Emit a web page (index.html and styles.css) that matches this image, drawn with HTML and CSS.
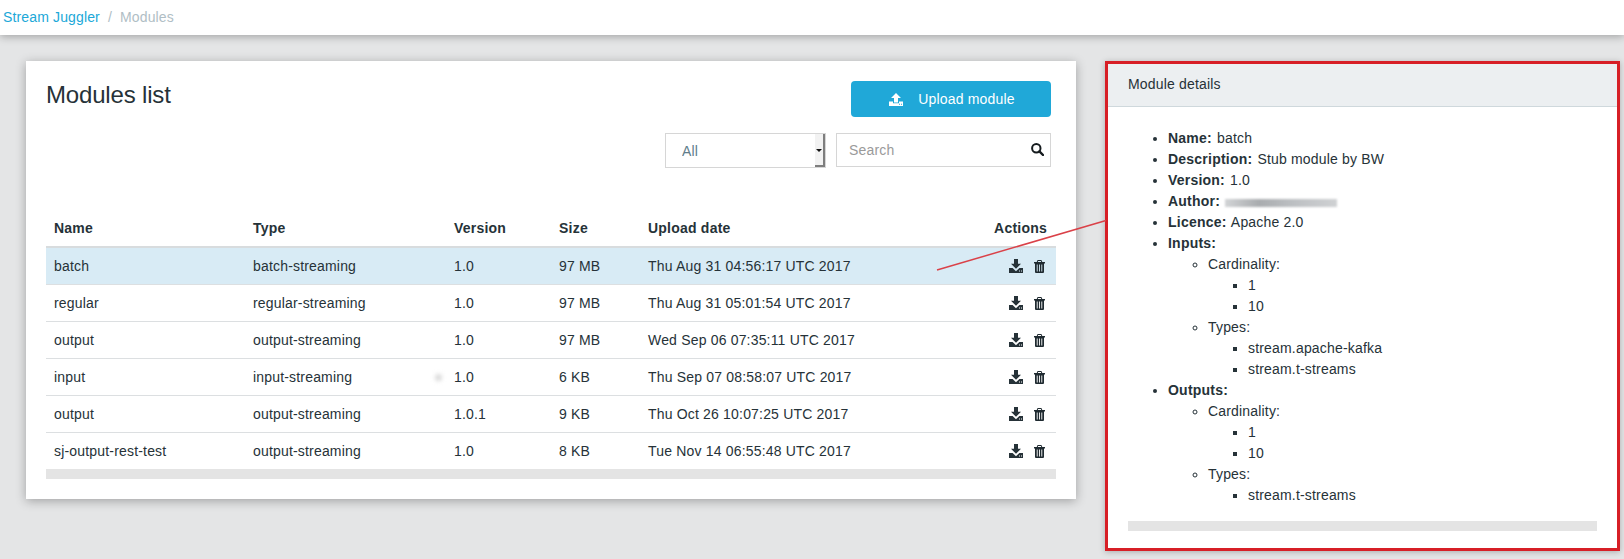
FILE: index.html
```html
<!DOCTYPE html>
<html lang="en">
<head>
<meta charset="utf-8">
<title>Modules</title>
<link rel="stylesheet" href="styles.css">
</head>
<body>
<svg class="defs" aria-hidden="true">
  <symbol id="i-download" viewBox="0 0 14 14"><path fill-rule="evenodd" d="M5 0h4v4.8h3L7 9.8 2 4.8h3zM0 9h3.6L7 12.2 10.4 9H14v5H0zM10 11.4v1h1v-1zM12 11.4v1h1v-1z"/></symbol>
  <symbol id="i-upload" viewBox="0 0 14 13"><path fill-rule="evenodd" d="M7 0l5 5H9v4.4H5V5H2zM0 8.4h4v1.8h6V8.4h4V13H0zM10 10.8v1h1v-1zM12 10.8v1h1v-1z"/></symbol>
  <symbol id="i-trash" viewBox="0 0 11 13"><path fill-rule="evenodd" d="M3.6 0h3.8l.9 2H11v1.4H10V12a1 1 0 0 1-1 1H2a1 1 0 0 1-1-1V3.4H0V2h2.7zM4.1 1.1L3.8 2h3.4l-.3-.9zM2.75 4.4v7h.9v-7zM5.05 4.4v7h.9v-7zM7.35 4.4v7h.9v-7z"/></symbol>
  <symbol id="i-search" viewBox="0 0 13 13"><circle cx="5.3" cy="5.3" r="4.2" fill="none" stroke="currentColor" stroke-width="2"/><path d="M8.4 8.4L12 12" fill="none" stroke="currentColor" stroke-width="2.4" stroke-linecap="round"/></symbol>
</svg>

<nav class="topbar">
  <a class="crumb-link" href="#">Stream Juggler</a>
  <span class="crumb-sep">/</span>
  <span class="crumb-active">Modules</span>
</nav>

<main class="content">
  <section class="card">
    <div class="card-head">
      <h1 class="title">Modules list</h1>
      <div class="tools">
        <button class="upload-btn" type="button">
          <svg class="upload-icon"><use href="#i-upload"/></svg>
          <span>Upload module</span>
        </button>
        <div class="filters">
          <div class="select-wrap">
            <select class="select"><option>All</option></select>
            <span class="select-arrow"></span>
          </div>
          <div class="search-wrap">
            <input class="search" type="text" placeholder="Search">
            <svg class="search-icon"><use href="#i-search"/></svg>
          </div>
        </div>
      </div>
    </div>

    <table class="modules">
      <colgroup>
        <col class="c-name"><col class="c-type"><col class="c-version"><col class="c-size"><col class="c-date"><col class="c-actions">
      </colgroup>
      <thead>
        <tr><th>Name</th><th>Type</th><th>Version</th><th>Size</th><th>Upload date</th><th class="th-actions">Actions</th></tr>
      </thead>
      <tbody>
        <tr class="selected"><td>batch</td><td>batch-streaming</td><td>1.0</td><td>97 MB</td><td>Thu Aug 31 04:56:17 UTC 2017</td><td><div class="actions"><svg class="ic-dl"><use href="#i-download"/></svg><svg class="ic-tr"><use href="#i-trash"/></svg></div></td></tr>
        <tr><td>regular</td><td>regular-streaming</td><td>1.0</td><td>97 MB</td><td>Thu Aug 31 05:01:54 UTC 2017</td><td><div class="actions"><svg class="ic-dl"><use href="#i-download"/></svg><svg class="ic-tr"><use href="#i-trash"/></svg></div></td></tr>
        <tr><td>output</td><td>output-streaming</td><td>1.0</td><td>97 MB</td><td>Wed Sep 06 07:35:11 UTC 2017</td><td><div class="actions"><svg class="ic-dl"><use href="#i-download"/></svg><svg class="ic-tr"><use href="#i-trash"/></svg></div></td></tr>
        <tr><td>input</td><td>input-streaming<span class="smudge"></span></td><td>1.0</td><td>6 KB</td><td>Thu Sep 07 08:58:07 UTC 2017</td><td><div class="actions"><svg class="ic-dl"><use href="#i-download"/></svg><svg class="ic-tr"><use href="#i-trash"/></svg></div></td></tr>
        <tr><td>output</td><td>output-streaming</td><td>1.0.1</td><td>9 KB</td><td>Thu Oct 26 10:07:25 UTC 2017</td><td><div class="actions"><svg class="ic-dl"><use href="#i-download"/></svg><svg class="ic-tr"><use href="#i-trash"/></svg></div></td></tr>
        <tr><td>sj-output-rest-test</td><td>output-streaming</td><td>1.0</td><td>8 KB</td><td>Tue Nov 14 06:55:48 UTC 2017</td><td><div class="actions"><svg class="ic-dl"><use href="#i-download"/></svg><svg class="ic-tr"><use href="#i-trash"/></svg></div></td></tr>
      </tbody>
    </table>
    <div class="scrollbar"></div>
  </section>

  <aside class="panel">
    <header class="panel-head">Module details</header>
    <div class="panel-body">
      <ul class="l1">
        <li><strong>Name:</strong> batch</li>
        <li><strong>Description:</strong> Stub module by BW</li>
        <li><strong>Version:</strong> 1.0</li>
        <li><strong>Author:</strong> <span class="blurred"></span></li>
        <li><strong>Licence:</strong> Apache 2.0</li>
        <li><strong>Inputs:</strong>
          <ul class="l2">
            <li>Cardinality:
              <ul class="l3"><li>1</li><li>10</li></ul>
            </li>
            <li>Types:
              <ul class="l3"><li>stream.apache-kafka</li><li>stream.t-streams</li></ul>
            </li>
          </ul>
        </li>
        <li><strong>Outputs:</strong>
          <ul class="l2">
            <li>Cardinality:
              <ul class="l3"><li>1</li><li>10</li></ul>
            </li>
            <li>Types:
              <ul class="l3"><li>stream.t-streams</li></ul>
            </li>
          </ul>
        </li>
      </ul>
      <div class="scrollbar panel-scroll"></div>
    </div>
  </aside>
</main>

<svg class="callout" width="1624" height="559" aria-hidden="true"><line x1="937" y1="270" x2="1106" y2="220.5"/></svg>
</body>
</html>
```

FILE: styles.css
```css
* { box-sizing: border-box; }

html, body {
  margin: 0;
  height: 559px;
  overflow: hidden;
}

body {
  position: relative;
  background: #e4e5e6;
  color: #263238;
  font-family: "Liberation Sans", Arial, sans-serif;
  font-size: 14px;
  line-height: 21px;
  letter-spacing: .18px;
}

strong { letter-spacing: .22px; margin-right: 1px; }

.defs { display: none; }

.topbar {
  display: flex;
  align-items: center;
  height: 35px;
  padding-left: 3px;
  background: #fff;
  box-shadow: 0 2px 8px rgba(0, 0, 0, .28);
}

.crumb-link { color: #20a8d8; text-decoration: none; letter-spacing: .14px; }
.crumb-sep { color: #b0bec5; margin: 0 8px; }
.crumb-active { color: #b0bec5; letter-spacing: .14px; }

.content {
  display: flex;
  align-items: flex-start;
  gap: 29px;
  padding: 26px 0 0 26px;
}

.card {
  width: 1050px;
  padding: 20px;
  background: #fff;
  box-shadow: 0 2px 10px rgba(0, 0, 0, .3);
}

.card-head {
  display: flex;
  justify-content: space-between;
  align-items: flex-start;
  margin-bottom: 42px;
  padding-right: 5px;
}

.title {
  margin: 0;
  font-size: 24px;
  font-weight: 400;
  line-height: 27px;
  letter-spacing: -.17px;
}

.tools {
  display: flex;
  flex-direction: column;
  align-items: flex-end;
  gap: 16px;
}

.upload-btn {
  display: flex;
  align-items: center;
  justify-content: center;
  gap: 15px;
  width: 200px;
  height: 36px;
  padding: 0 0 0 2px;
  border: 0;
  border-radius: 4px;
  background: #20a8d8;
  color: #fff;
  font: inherit;
  letter-spacing: .18px;
}

.upload-icon { width: 14px; height: 13px; fill: #fff; }

.filters { display: flex; align-items: flex-start; gap: 10px; }

.select-wrap { position: relative; width: 161px; height: 35px; }

.select {
  display: block;
  width: 100%;
  height: 100%;
  padding: 2px 0 0 16px;
  border: 1px solid #d6d6d6;
  border-radius: 0;
  background: #fff;
  color: #607d8b;
  font: inherit;
  letter-spacing: .18px;
  appearance: none;
}

.select-arrow {
  position: absolute;
  top: 1px;
  right: 1px;
  bottom: 1px;
  width: 10px;
  background: #f2f2f2;
  border-right: 2px solid #7e7e7e;
  border-bottom: 2px solid #7e7e7e;
}

.select-arrow::after {
  content: "";
  position: absolute;
  top: 15px;
  left: 1px;
  border-top: 3px solid #111;
  border-left: 3px solid transparent;
  border-right: 3px solid transparent;
}

.search-wrap { position: relative; width: 215px; height: 34px; }

.search {
  display: block;
  width: 100%;
  height: 100%;
  padding: 0 30px 0 12px;
  border: 1px solid #d6d6d6;
  border-radius: 0;
  background: #fff;
  color: #607d8b;
  font: inherit;
  letter-spacing: .18px;
}

.search::placeholder { color: #9a9a9a; opacity: 1; }

.search-icon {
  position: absolute;
  top: 10px;
  right: 7px;
  width: 13px;
  height: 13px;
  color: #151b1e;
}

.modules {
  width: 100%;
  table-layout: fixed;
  border-collapse: separate;
  border-spacing: 0;
}

.c-name { width: 199px; }
.c-type { width: 201px; }
.c-version { width: 105px; }
.c-size { width: 89px; }
.c-date { width: 300px; }

.modules th {
  height: 38px;
  padding: 0 8px;
  border-bottom: 2px solid #d8dcde;
  font-weight: 700;
  letter-spacing: .22px;
  text-align: left;
}

.modules th.th-actions { padding-right: 9px; text-align: right; }

.modules td {
  position: relative;
  height: 37px;
  padding: 0 8px;
  border-bottom: 1px solid #dcdfe1;
  white-space: nowrap;
}

.modules tbody tr:last-child td { height: 36px; border-bottom: 0; }

.selected td { background: #d8ebf5; }

.actions {
  display: flex;
  justify-content: flex-end;
  align-items: center;
  gap: 11px;
  padding-right: 3px;
}

.ic-dl { width: 14px; height: 14px; fill: #263238; }
.ic-tr { width: 11px; height: 13px; fill: #1f2a30; }

.smudge {
  position: absolute;
  top: 15px;
  right: 4px;
  width: 7px;
  height: 7px;
  border-radius: 50%;
  background: #d8d8d8;
  filter: blur(2px);
}

.scrollbar { height: 10px; background: #e4e4e4; }

.panel {
  width: 515px;
  height: 490px;
  border: 3px solid #d71f26;
  background: #fff;
  box-shadow: 0 1px 6px rgba(0, 0, 0, .25);
}

.panel-head {
  height: 43px;
  padding: 0 20px;
  border-bottom: 1px solid #cfd8dc;
  background: #eceff1;
  line-height: 41px;
}

.panel-body { padding: 21px 20px 0; }

.panel-body ul { margin: 0; padding-left: 40px; }

.l1 { list-style: disc; }
.l2 { list-style: circle; }
.l3 { list-style: square; }

.panel-scroll { margin-top: 15px; }

.blurred {
  display: inline-block;
  width: 112px;
  height: 8px;
  vertical-align: -1px;
  background: linear-gradient(90deg, #d2d4d6, #a9acaf 30%, #bcbfc2 60%, #cfd1d3);
  filter: blur(1.2px);
}

.callout {
  position: absolute;
  top: 0;
  left: 0;
  pointer-events: none;
}

.callout line { stroke: #da4148; stroke-width: 1.5; }
```
